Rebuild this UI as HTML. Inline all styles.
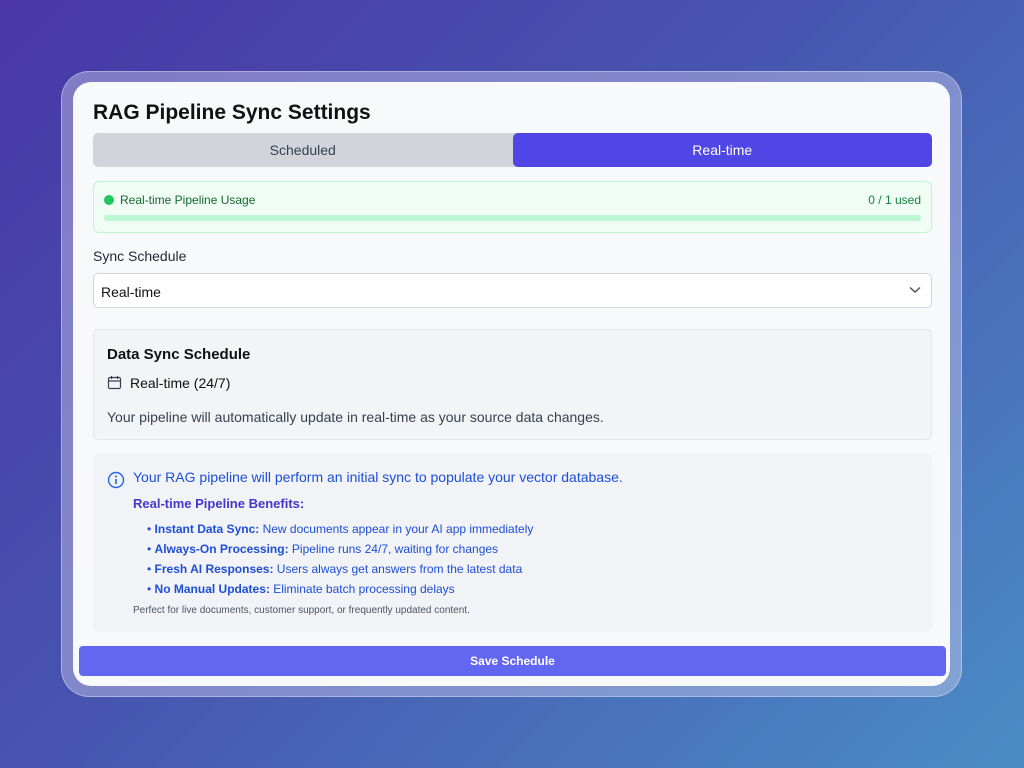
<!DOCTYPE html>
<html><head><style>
*{box-sizing:border-box;margin:0;padding:0}
body{width:1024px;height:768px;overflow:hidden;font-family:"Liberation Sans",sans-serif;background:linear-gradient(135deg,#4a36a6 0%,#4755b0 45%,#4a8cc6 100%);position:relative}
.frame{position:absolute;left:61px;top:71px;width:901px;height:626px;border-radius:28px;background:rgba(200,200,235,.45);border:1px solid rgba(255,255,255,.35)}
.card{position:absolute;left:73px;top:82px;width:877px;height:604px;border-radius:18px;background:#f8f9fb}
.abs{position:absolute}
h1{position:absolute;left:93px;top:101px;font-size:21px;font-weight:bold;color:#111}
.tabs{left:93px;top:133px;width:839px;height:34px;border-radius:5px;background:#d1d5db;display:flex;font-size:14px}
.tabs div{flex:1;display:flex;align-items:center;justify-content:center;color:#374151}
.tabs .on{background:#4f46e5;color:#fff;border-radius:5px}
.usage{left:93px;top:181px;width:839px;height:52px;border-radius:6px;background:#f0fdf4;border:1px solid #bbf7d0}
.sel{left:93px;top:273px;width:839px;height:35px;border:1px solid #d1d5db;border-radius:5px;background:#fff;font-size:14px;color:#111;padding:10px 0 0 7px}
.box{left:93px;top:329px;width:839px;height:111px;border:1px solid #e5e7eb;border-radius:5px;background:#f3f4f6}
.info{left:93px;top:454px;width:839px;height:178px;border-radius:6px;background:#f1f3f6}
.btn{left:79px;top:646px;width:867px;height:30px;border-radius:4px;background:#6366f1;color:#fff;font-size:12px;font-weight:bold;display:flex;align-items:center;justify-content:center}
li{list-style:none;font-size:12px;color:#1d4ed8;height:20px}
li b{color:#1d4ed8}
</style></head><body>
<div class="frame"></div>
<div class="card"></div>
<h1>RAG Pipeline Sync Settings</h1>
<div class="abs tabs"><div>Scheduled</div><div class="on">Real-time</div></div>
<div class="abs usage">
 <div class="abs" style="left:10px;top:13px;width:10px;height:10px;border-radius:50%;background:#22c55e"></div>
 <div class="abs" style="left:26px;top:11px;font-size:12px;color:#166534">Real-time Pipeline Usage</div>
 <div class="abs" style="right:10px;top:11px;font-size:12px;color:#15803d">0 / 1 used</div>
 <div class="abs" style="left:10px;top:33px;width:817px;height:6px;border-radius:3px;background:#bbf7d0"></div>
</div>
<div class="abs" style="left:93px;top:248px;font-size:14px;color:#1f2937">Sync Schedule</div>
<div class="abs sel">Real-time
 <svg class="abs" style="right:10px;top:12px" width="12" height="8" viewBox="0 0 12 8"><path d="M1 1.5l5 4.5 5-4.5" fill="none" stroke="#4b5563" stroke-width="1.5"/></svg>
</div>
<div class="abs box">
 <div class="abs" style="left:13px;top:16px;font-size:15px;font-weight:bold;color:#111">Data Sync Schedule</div>
 <svg class="abs" style="left:13px;top:45px" width="15" height="15" viewBox="0 0 15 15"><rect x="1.5" y="2.5" width="12" height="11" rx="1.5" fill="none" stroke="#374151" stroke-width="1.2"/><path d="M1.5 6h12M4.5 1v3M10.5 1v3" stroke="#374151" stroke-width="1.2"/></svg>
 <div class="abs" style="left:36px;top:45px;font-size:14px;color:#111">Real-time (24/7)</div>
 <div class="abs" style="left:13px;top:79px;font-size:14px;color:#374151">Your pipeline will automatically update in real-time as your source data changes.</div>
</div>
<div class="abs info">
 <svg class="abs" style="left:14px;top:17px" width="18" height="18" viewBox="0 0 18 18"><circle cx="9" cy="9" r="7.5" fill="none" stroke="#2563eb" stroke-width="1.4"/><path d="M9 8v5" stroke="#2563eb" stroke-width="1.6"/><circle cx="9" cy="5.5" r="1" fill="#2563eb"/></svg>
 <div class="abs" style="left:40px;top:15px;font-size:14px;color:#1d4ed8">Your RAG pipeline will perform an initial sync to populate your vector database.</div>
 <div class="abs" style="left:40px;top:42px;font-size:13px;font-weight:bold;color:#4338ca">Real-time Pipeline Benefits:</div>
 <ul class="abs" style="left:54px;top:68px">
  <li>• <b>Instant Data Sync:</b> New documents appear in your AI app immediately</li>
  <li>• <b>Always-On Processing:</b> Pipeline runs 24/7, waiting for changes</li>
  <li>• <b>Fresh AI Responses:</b> Users always get answers from the latest data</li>
  <li>• <b>No Manual Updates:</b> Eliminate batch processing delays</li>
 </ul>
 <div class="abs" style="left:40px;top:151px;font-size:10px;color:#4b5563">Perfect for live documents, customer support, or frequently updated content.</div>
</div>
<div class="abs btn">Save Schedule</div>
</body></html>
